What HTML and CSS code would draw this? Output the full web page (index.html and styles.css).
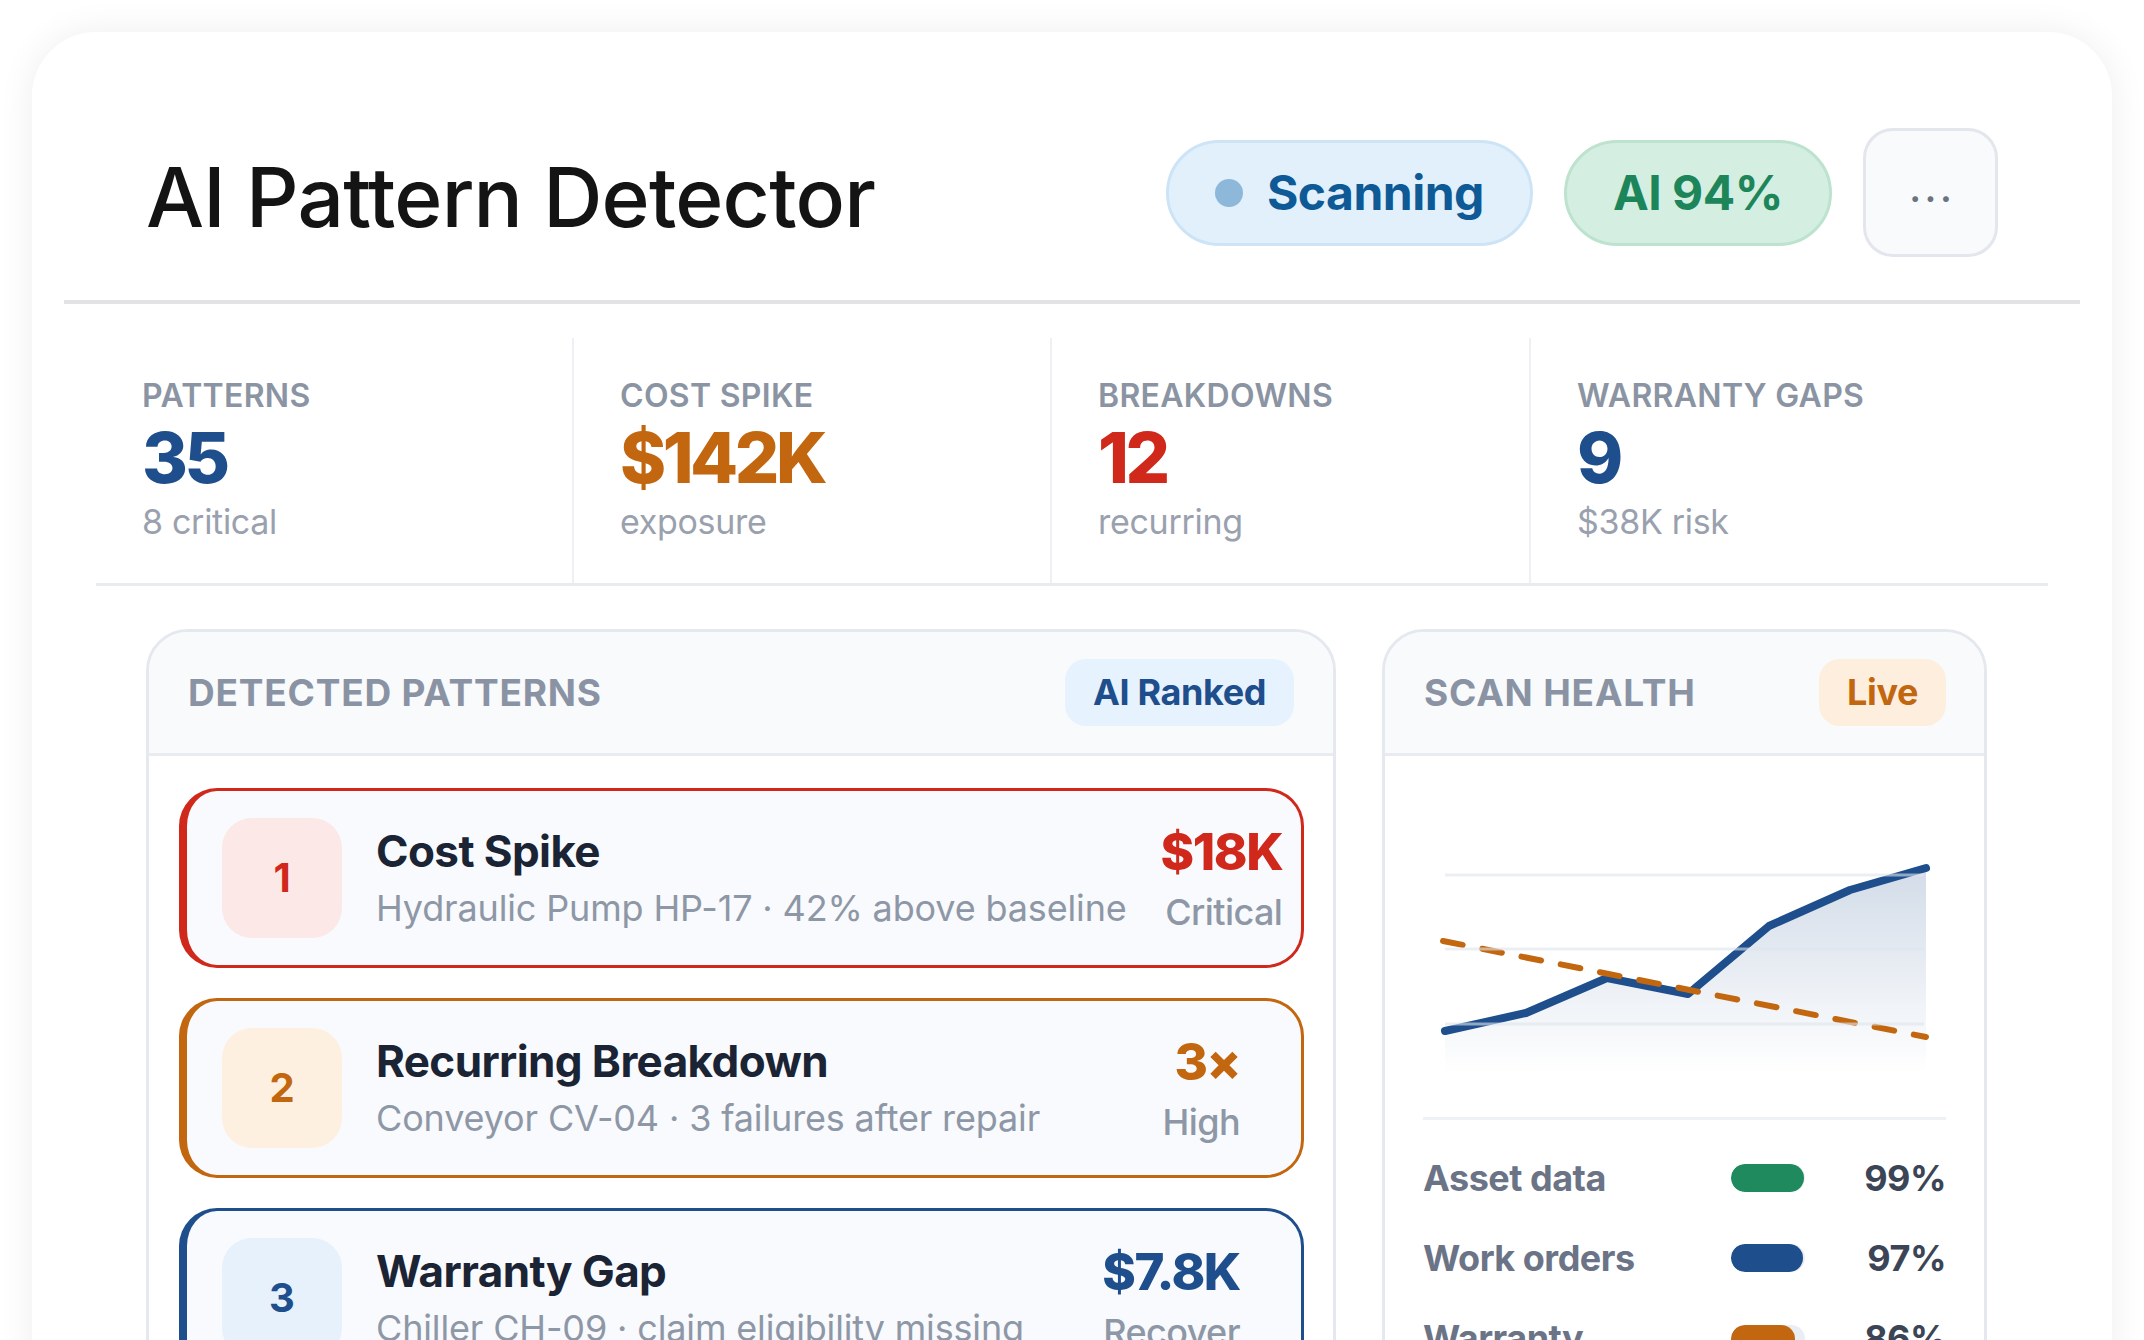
FILE: index.html
```html
<!DOCTYPE html>
<html lang="en">
<head>
    <meta charset="UTF-8">
    <title>AI Pattern Detector</title>
    <link rel="stylesheet" href="styles.css">
</head>
<body>
    <div class="app">
        <header class="app-header">
            <h1>AI Pattern Detector</h1>
            <div class="header-actions">
                <span class="pill pill-scan"><span class="pill-dot"></span>Scanning</span>
                <span class="pill pill-ai">AI 94%</span>
                <button class="more-btn">···</button>
            </div>
        </header>

        <div class="stats">
            <div class="stat">
                <div class="stat-label">Patterns</div>
                <div class="stat-value blue">35</div>
                <div class="stat-sub">8 critical</div>
            </div>
            <div class="stat">
                <div class="stat-label">Cost Spike</div>
                <div class="stat-value orange">$142K</div>
                <div class="stat-sub">exposure</div>
            </div>
            <div class="stat">
                <div class="stat-label">Breakdowns</div>
                <div class="stat-value red">12</div>
                <div class="stat-sub">recurring</div>
            </div>
            <div class="stat">
                <div class="stat-label">Warranty Gaps</div>
                <div class="stat-value blue">9</div>
                <div class="stat-sub">$38K risk</div>
            </div>
        </div>

        <div class="main">
            <section class="panel">
                <div class="panel-head">
                    <h2>Detected Patterns</h2>
                    <span class="tag tag-blue">AI Ranked</span>
                </div>
                <div class="panel-body pattern-list">
                    <div class="pattern pattern-red">
                        <div class="rank">1</div>
                        <div class="pattern-text">
                            <div class="pattern-title">Cost Spike</div>
                            <div class="pattern-sub">Hydraulic Pump HP-17 · 42% above baseline</div>
                        </div>
                        <div class="pattern-meta">
                            <div class="pattern-value">$18K</div>
                            <div class="pattern-level">Critical</div>
                        </div>
                    </div>
                    <div class="pattern pattern-orange">
                        <div class="rank">2</div>
                        <div class="pattern-text">
                            <div class="pattern-title">Recurring Breakdown</div>
                            <div class="pattern-sub">Conveyor CV-04 · 3 failures after repair</div>
                        </div>
                        <div class="pattern-meta">
                            <div class="pattern-value">3×</div>
                            <div class="pattern-level">High</div>
                        </div>
                    </div>
                    <div class="pattern pattern-blue">
                        <div class="rank">3</div>
                        <div class="pattern-text">
                            <div class="pattern-title">Warranty Gap</div>
                            <div class="pattern-sub">Chiller CH-09 · claim eligibility missing</div>
                        </div>
                        <div class="pattern-meta">
                            <div class="pattern-value">$7.8K</div>
                            <div class="pattern-level">Recover</div>
                        </div>
                    </div>
                </div>
            </section>

            <section class="panel">
                <div class="panel-head health-head">
                    <h2>Scan Health</h2>
                    <span class="tag tag-orange">Live</span>
                </div>
                <div class="panel-body health-body">
                    <svg class="chart" viewBox="0 0 523 300" width="523" height="300">
                        <defs>
                            <linearGradient id="areaFill" x1="0" y1="80" x2="0" y2="285" gradientUnits="userSpaceOnUse">
                                <stop offset="0" stop-color="#1e4e8c" stop-opacity="0.2"/>
                                <stop offset="1" stop-color="#1e4e8c" stop-opacity="0"/>
                            </linearGradient>
                        </defs>
                        <path d="M22 243 L103 225 L184 190 L265 206 L346 138 L427 102 L503 80 L503 285 L22 285 Z" fill="url(#areaFill)"/>
                        <path d="M22 243 L103 225 L184 190 L265 206 L346 138 L427 102 L503 80" fill="none" stroke="#1e4e8c" stroke-width="8" stroke-linejoin="round" stroke-linecap="round"/>
                        <path d="M20 153 L503 249" fill="none" stroke="#c2670f" stroke-width="6" stroke-dasharray="20 20" stroke-linecap="round"/>
                        <g stroke="#dfe6ee" stroke-width="3" opacity="0.6">
                            <line x1="22" y1="87" x2="501" y2="87"/>
                            <line x1="22" y1="161" x2="501" y2="161"/>
                            <line x1="22" y1="236" x2="501" y2="236"/>
                        </g>
                    </svg>
                    <div class="legend">
                        <div class="legend-row">
                            <span class="legend-label">Asset data</span>
                            <span class="bar"><span class="bar-fill green" style="width: 99%"></span></span>
                            <span class="legend-pct">99%</span>
                        </div>
                        <div class="legend-row">
                            <span class="legend-label">Work orders</span>
                            <span class="bar"><span class="bar-fill blue-bg" style="width: 97%"></span></span>
                            <span class="legend-pct">97%</span>
                        </div>
                        <div class="legend-row">
                            <span class="legend-label">Warranty</span>
                            <span class="bar"><span class="bar-fill orange-bg" style="width: 86%"></span></span>
                            <span class="legend-pct">86%</span>
                        </div>
                    </div>
                </div>
            </section>
        </div>
    </div>
</body>
</html>
```

FILE: styles.css
```css
* {
    box-sizing: border-box;
}
html, body {
    height: 100%;
}
body {
    margin: 0;
    font-family: Inter, "Noto Sans", sans-serif;
    background-color: #ffffff;
    color: #1b2434;
    overflow: hidden;
}
.app {
    margin: 32px 32px 0;
    min-height: 1400px;
    background-color: #fff;
    border-radius: 64px 64px 0 0;
    box-shadow: 0 0 36px rgba(0, 0, 0, 0.07);
}

/* header */
.app-header {
    margin: 0 32px;
    padding: 96px 82px 43px;
    display: flex;
    align-items: center;
    justify-content: space-between;
    border-bottom: 4px solid #e3e3e5;
}
.app-header h1 {
    margin: 0;
    padding-top: 9px;
    font-size: 82px;
    font-weight: 500;
    letter-spacing: -0.8px;
    color: #141414;
}
.header-actions {
    display: flex;
    align-items: center;
    gap: 31px;
}
.pill {
    display: inline-flex;
    align-items: center;
    height: 106px;
    padding: 0 46px;
    border-radius: 53px;
    font-size: 48px;
    font-weight: 700;
    letter-spacing: -0.5px;
}
.pill-scan {
    background-color: #e2f0fc;
    border: 3px solid #cde4f6;
    color: #0e5a96;
}
.pill-dot {
    width: 28px;
    height: 28px;
    border-radius: 50%;
    background-color: #8db8da;
    margin-right: 24px;
}
.pill-ai {
    background-color: #d4efe2;
    border: 3px solid #bde3cf;
    color: #1d855a;
}
.more-btn {
    width: 135px;
    height: 129px;
    border: 3px solid #e3e6ec;
    border-radius: 30px;
    background-color: #f9fafb;
    color: #6b7280;
    font-family: inherit;
    font-size: 34px;
    font-weight: 700;
    letter-spacing: 4px;
    padding: 12px 0 0 4px;
}

/* stats */
.stats {
    margin: 34px 64px 0;
    display: grid;
    grid-template-columns: 476px 478px 479px 1fr;
    border-bottom: 3px solid #e8ebf0;
}
.stat {
    padding: 39px 46px 40px;
    border-left: 2px solid #eef0f3;
}
.stat:first-child {
    border-left: none;
}
.stat-label {
    font-size: 32px;
    line-height: 1.2;
    font-weight: 600;
    text-transform: uppercase;
    color: #8b94a3;
    letter-spacing: 0.3px;
}
.stat-value {
    margin-top: 4px;
    font-size: 70px;
    line-height: 1.12;
    font-weight: 800;
    letter-spacing: -3.5px;
}
.stat-sub {
    margin-top: 4px;
    font-size: 34px;
    line-height: 1.2;
    color: #9aa1ae;
    letter-spacing: -0.3px;
}
.blue { color: #1e4e8c; }
.orange { color: #c2670f; }
.red { color: #d0281a; }

/* panels */
.main {
    padding: 43px 125px 0 114px;
    display: grid;
    grid-template-columns: 1190px 1fr;
    gap: 46px;
    align-items: start;
}
.panel {
    border: 3px solid #e5e9ef;
    border-radius: 42px;
    background-color: #fff;
    overflow: hidden;
}
.panel-head {
    height: 124px;
    padding: 0 39px;
    display: flex;
    align-items: center;
    justify-content: space-between;
    background-color: #f8fafc;
    border-bottom: 3px solid #e8ecf1;
}
.panel-head h2 {
    margin: 0;
    font-size: 37px;
    font-weight: 700;
    text-transform: uppercase;
    letter-spacing: 0.8px;
    color: #8a93a3;
}
.health-head {
    padding: 0 38px 0 39px;
}
.tag {
    display: inline-flex;
    align-items: center;
    height: 67px;
    padding: 0 28px;
    border-radius: 21px;
    font-size: 36px;
    font-weight: 700;
    letter-spacing: -0.4px;
}
.tag-blue {
    background-color: #e6f2fd;
    color: #1e4e8c;
}
.tag-orange {
    background-color: #fdeedd;
    color: #c2670f;
}

/* detected patterns */
.pattern-list {
    padding: 32px 29px 32px 30px;
    display: flex;
    flex-direction: column;
    gap: 30px;
}
.pattern {
    display: flex;
    align-items: center;
    padding: 27px 61px 27px 35px;
    border: 3px solid;
    border-left-width: 8px;
    border-radius: 38px;
    background-color: #f8fafd;
}
.pattern-red { border-color: #d0281a; }
.pattern-orange { border-color: #c2670f; }
.pattern-blue { border-color: #1e4e8c; }
.rank {
    flex-shrink: 0;
    width: 120px;
    height: 120px;
    border-radius: 30px;
    display: flex;
    align-items: center;
    justify-content: center;
    font-size: 40px;
    font-weight: 700;
}
.pattern-red .rank { background-color: #fde8e8; color: #d0281a; }
.pattern-orange .rank { background-color: #fef0e1; color: #c2670f; }
.pattern-blue .rank { background-color: #e6f1fc; color: #1e4e8c; }
.pattern-text {
    flex: 1 0 auto;
    margin-left: 34px;
    white-space: nowrap;
}
.pattern-title {
    font-size: 44px;
    line-height: 1.2;
    font-weight: 700;
    letter-spacing: -0.6px;
    color: #1b2434;
}
.pattern-sub {
    margin-top: 9px;
    font-size: 36px;
    line-height: 1.2;
    letter-spacing: -0.15px;
    color: #8e97a6;
}
.pattern-meta {
    flex-shrink: 0;
    margin-left: 34px;
    text-align: right;
    white-space: nowrap;
}
.pattern-value {
    font-size: 51px;
    line-height: 1.2;
    font-weight: 800;
    letter-spacing: -1.5px;
}
.pattern-red .pattern-value { color: #d0281a; }
.pattern-orange .pattern-value { color: #c2670f; }
.pattern-blue .pattern-value { color: #1e4e8c; }
.pattern-level {
    margin-top: 8px;
    font-size: 36px;
    line-height: 1.2;
    font-weight: 500;
    letter-spacing: -0.6px;
    color: #8e97a6;
}

/* scan health */
.health-body {
    padding: 32px 38px 40px;
}
.chart {
    display: block;
}
.legend {
    margin-top: 29px;
    padding-top: 37px;
    border-top: 3px solid #eef1f5;
    display: flex;
    flex-direction: column;
    gap: 37px;
}
.legend-row {
    display: grid;
    grid-template-columns: 1fr 74px 141px;
    align-items: center;
    font-size: 36px;
    line-height: 1.2;
    font-weight: 700;
}
.legend-label {
    color: #6b7486;
    letter-spacing: -0.5px;
}
.legend-pct {
    text-align: right;
    color: #3b4556;
    letter-spacing: -0.5px;
}
.bar {
    display: block;
    height: 28px;
    border-radius: 14px;
    background-color: #e9eef4;
    overflow: hidden;
}
.bar-fill {
    display: block;
    height: 100%;
    border-radius: 14px;
}
.green { background-color: #1e8a5e; }
.blue-bg { background-color: #1e4e8c; }
.orange-bg { background-color: #c2670f; }
```
